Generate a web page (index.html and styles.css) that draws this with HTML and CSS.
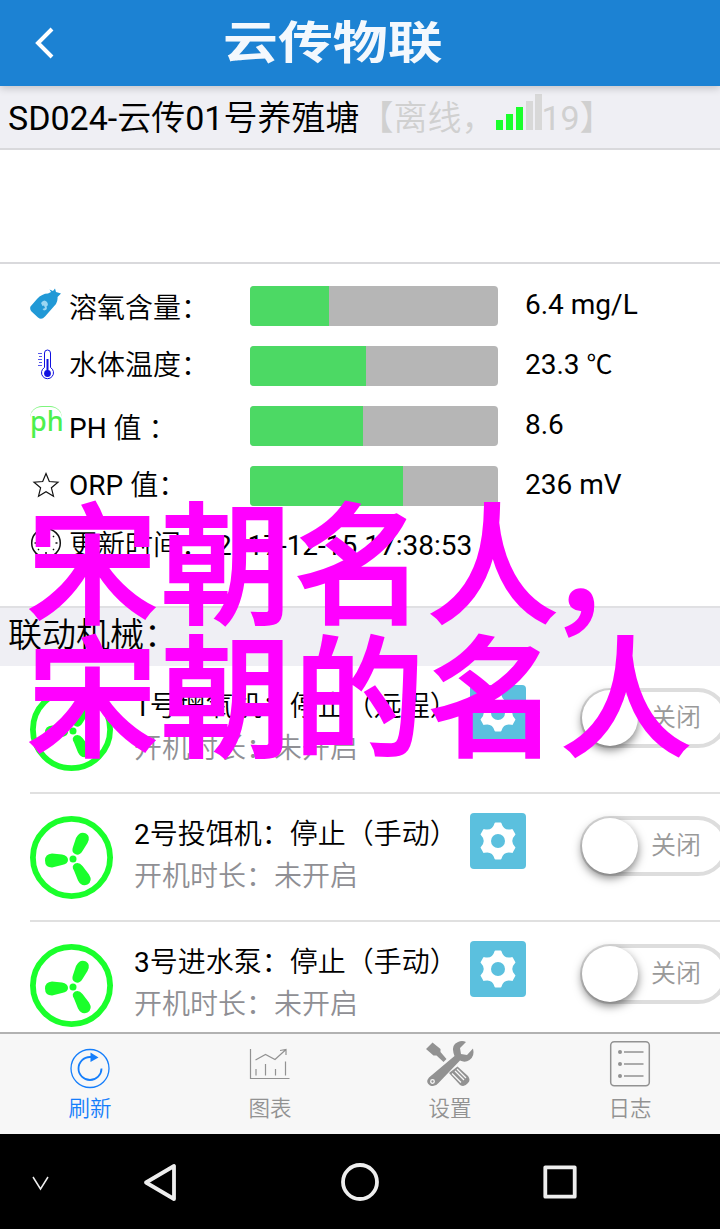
FILE: index.html
```html
<!DOCTYPE html>
<html lang="zh-CN">

<head>
    <meta charset="UTF-8">
    <meta name="viewport" content="width=device-width, initial-scale=1.0">
    <title>云传物联</title>
    <link rel="stylesheet" href="styles.css">
</head>

<body>
    <!-- 公用图标 -->
    <svg class="symbols">
        <symbol id="fan" viewBox="0 0 83 83">
            <circle cx="41.5" cy="41.5" r="38.6" fill="none" stroke="#1aff2b" stroke-width="5.8" />
            <g fill="#1aff2b">
                <circle cx="43" cy="43" r="3.5" />
                <path d="M22 37.500L32 38.500Q38 39.500 38 44Q38 48 32 49L22 51.500Q15 51.500 15 44.500Q15 38 22 37.500Z" />
                <path d="M43 31L46 22Q50 14.500 56 17.500Q61 20.500 57.500 27L52.500 35Q49 40.500 45 38Q41 36 43 31Z" />
                <path d="M44 54.500Q41 50 45 47.500Q49 45.500 52.500 50L59 58.500Q63 65 57.500 68.500Q51.500 71 48 64.500Z" />
            </g>
        </symbol>
        <symbol id="gear" viewBox="-20 -20 40 40">
            <path fill="#fff" stroke="#fff" stroke-width="2" stroke-linejoin="round"
                d="M-2.500 -17.500H2.500Q5 -8.600 13.900 -10.900L16.400 -6.600Q10 0 16.400 6.600L13.900 10.900Q5 8.600 2.500 17.500H-2.500Q-5 8.600 -13.900 10.900L-16.400 6.600Q-10 0 -16.400 -6.600L-13.900 -10.900Q-5 -8.600 -2.500 -17.500Z" />
            <circle r="7" fill="#5bc0de" />
        </symbol>
    </svg>

    <header class="header">
        <svg class="back" width="22" height="32" viewBox="0 0 22 32">
            <path d="M18 2L4 16L18 30" fill="none" stroke="#fff" stroke-width="4" />
        </svg>
        <h1 class="logo">云传物联</h1>
    </header>

    <div class="pond">
        <span>SD024-云传01号养殖塘</span>
        <span class="offline">【离线，</span>
        <svg class="signal" width="48" height="38" viewBox="0 0 48 38">
            <path fill="#1aff2b" d="M1 27h7v10H1zM11 21h7v16h-7zM21 14h7v23h-7z" />
            <path fill="#d8d8d8" d="M31 8h7v29h-7zM40 1h7v36h-7z" />
        </svg>
        <span class="offline">19】</span>
    </div>

    <div class="blank"></div>

    <ul class="params">
        <li>
            <svg class="icon icon_do" width="32" height="32" viewBox="0 0 32 32">
                <path fill="#2199d6"
                    d="M.500 18.500L7 11Q12 5.500 18 5.500L21 4L19.500 1.500L23 3L25 .500L26 4L31 5.500L27.500 9Q28 12 26 16L15 28.500Q11.500 32.500 8 29.500L1.500 23.500Q-.500 21 .500 18.500Z" />
                <path fill="#9bd7f2" d="M11 15Q14 10.500 17 14Q19 17 16.500 18.500Q18 22 14 22.500L12.500 21L15 20L14 17.500L12.500 18Z" />
            </svg>
            <span class="name name_do">溶氧含量：</span>
            <div class="bar"><div class="fill" style="width: 31.8%"></div></div>
            <span class="value">6.4 mg/L</span>
        </li>
        <li>
            <svg class="icon icon_temp" width="32" height="32" viewBox="0 0 32 32">
                <g fill="none" stroke="#1010e0" stroke-width="1">
                    <path d="M14.500 18.500V4Q14.500 1 17.500 1Q20.500 1 20.500 4V18.500A6 6 0 1 1 14.500 18.500Z" />
                    <path d="M8 4.500h4M9 7.500h3M8 10.500h4M9 13.500h3M8 16.500h4" opacity=".7" />
                    <path d="M17.500 10V24" stroke-width="2" />
                </g>
                <circle cx="17.500" cy="24.500" r="3.400" fill="#1010e0" />
            </svg>
            <span class="name name_temp">水体温度：</span>
            <div class="bar"><div class="fill" style="width: 46.8%"></div></div>
            <span class="value">23.3 <span class="unit">℃</span></span>
        </li>
        <li>
            <span class="icon icon_ph">ph</span>
            <span class="name name_ph">PH 值 ：</span>
            <div class="bar"><div class="fill" style="width: 45.6%"></div></div>
            <span class="value">8.6</span>
        </li>
        <li>
            <svg class="icon icon_orp" width="32" height="32" viewBox="0 0 32 32">
                <path fill="none" stroke="#111" stroke-width="1.200"
                    d="M16 4.500L19.300 12.500L28 13.200L21.400 18.800L23.500 27.200L16 22.700L8.500 27.200L10.600 18.800L4 13.200L12.700 12.500Z" />
            </svg>
            <span class="name name_orp">ORP 值：</span>
            <div class="bar"><div class="fill" style="width: 61.8%"></div></div>
            <span class="value">236 mV</span>
        </li>
        <li>
            <svg class="icon icon_time" width="32" height="32" viewBox="0 0 32 32">
                <circle cx="16" cy="16" r="14.300" fill="none" stroke="#111" stroke-width="1.500" />
                <path fill="none" stroke="#111" stroke-width="1.500"
                    d="M16 5V16H9M4.500 16h2M25.500 16h2M16 25v2M8 23l1 -1M24 23l-1 -1M8 9l1 1M24 9l-1 1" />
            </svg>
            <span class="name name_time">更新时间： 2017-12-15 17:38:53</span>
        </li>
    </ul>

    <h2 class="group">联动机械：</h2>

    <ul class="devices">
        <li>
            <svg class="fan"><use href="#fan" /></svg>
            <div class="item">
                <div class="info">
                    <p>1号增氧机：停止（远程）</p>
                    <p class="time">开机时长：未开启</p>
                </div>
                <button class="set"><svg width="40" height="40"><use href="#gear" /></svg></button>
                <div class="switch"><i class="knob"></i><span>关闭</span></div>
            </div>
        </li>
        <li>
            <svg class="fan"><use href="#fan" /></svg>
            <div class="item">
                <div class="info">
                    <p>2号投饵机：停止（手动）</p>
                    <p class="time">开机时长：未开启</p>
                </div>
                <button class="set"><svg width="40" height="40"><use href="#gear" /></svg></button>
                <div class="switch"><i class="knob"></i><span>关闭</span></div>
            </div>
        </li>
        <li>
            <svg class="fan"><use href="#fan" /></svg>
            <div class="item">
                <div class="info">
                    <p>3号进水泵：停止（手动）</p>
                    <p class="time">开机时长：未开启</p>
                </div>
                <button class="set"><svg width="40" height="40"><use href="#gear" /></svg></button>
                <div class="switch"><i class="knob"></i><span>关闭</span></div>
            </div>
        </li>
    </ul>

    <nav class="tabs">
        <a class="tab current">
            <svg width="50" height="50" viewBox="0 0 50 50" fill="none" stroke="#157efb">
                <circle cx="25" cy="29.500" r="19" stroke-width="1.300" />
                <path d="M36.500 29.500A11.500 11.500 0 1 1 25 18H27" stroke-width="1.800" />
                <path d="M25.500 13.500L33.500 18.500L25.500 23Z" fill="#157efb" stroke="none" />
            </svg>
            <span>刷新</span>
        </a>
        <a class="tab">
            <svg width="50" height="50" viewBox="0 0 50 50" fill="none" stroke="#929292" stroke-width="1.200">
                <path d="M5.500 10V39.500H44.500M10.500 21L20.500 15.500L30 20.500L41 10.500M35 11.500L41 10.500V16M11 36.500V30M20.500 36.500V25M30.500 36.500V30M40.500 36.500V22.500" />
            </svg>
            <span>图表</span>
        </a>
        <a class="tab">
            <svg width="50" height="50" viewBox="0 0 50 50">
                <g fill="#929292">
                    <path d="M1 10L7.500 3.500L15.500 10V13L21.500 20L18.500 23L11.500 16.500H8.500Z" />
                    <path d="M28.500 14Q26 6 33 3Q37 1 41 3L35 9L36 15L42 16L48 9.500Q50 17 44.500 21Q40 24 35 21.500L13.500 44Q10 48.500 5 46.500Q0 43 4 38.500L29.500 17Z" />
                    <path d="M24 34L32.500 27.500L43 37Q46 41 43 44Q39.500 48.500 35 46Z" />
                </g>
                <g fill="none" stroke="#f7f7f7" stroke-width="1.300">
                    <circle cx="7.500" cy="42.500" r="1.800" />
                    <path d="M27 34.500L36 43.500M30 32L39 41M32 30L41 39" />
                </g>
            </svg>
            <span>设置</span>
        </a>
        <a class="tab">
            <svg width="50" height="50" viewBox="0 0 50 50" fill="none" stroke="#929292" stroke-width="1.500">
                <rect x="5.700" y="2.700" width="38.600" height="44" rx="3.500" />
                <path d="M19 13h19.500M19 25h19.500M19 37h19.500" />
                <g fill="#929292" stroke="none">
                    <circle cx="15" cy="13" r="2" />
                    <circle cx="15" cy="25" r="2" />
                    <circle cx="15" cy="37" r="2" />
                </g>
            </svg>
            <span>日志</span>
        </a>
    </nav>

    <!-- 安卓导航栏 -->
    <footer class="android">
        <svg class="hide" width="80" height="40" viewBox="0 0 80 40" fill="none" stroke="#eee">
            <path d="M33 15L40.500 27L48 15" stroke-width="1.500" />
        </svg>
        <svg width="40" height="40" viewBox="0 0 40 40" fill="none" stroke="#eee" stroke-width="3.800" stroke-linejoin="round">
            <path d="M6 20.500L34 4V37Z" />
        </svg>
        <svg width="40" height="40" viewBox="0 0 40 40" fill="none" stroke="#eee" stroke-width="3.800">
            <circle cx="20" cy="20" r="17" />
        </svg>
        <svg width="40" height="40" viewBox="0 0 40 40" fill="none" stroke="#eee" stroke-width="3.800" stroke-linejoin="round">
            <rect x="5.300" y="5.300" width="29.400" height="29.400" />
        </svg>
    </footer>

    <div class="caption">宋朝名人<span class="comma">，</span><br>宋朝的名人</div>
</body>

</html>
```
FILE: styles.css
```css
* {
    margin: 0;
    padding: 0;
    box-sizing: border-box;
}

body {
    position: relative;
    display: flex;
    flex-direction: column;
    width: 720px;
    height: 1229px;
    overflow: hidden;
    background-color: #fff;
    color: #000;
    font-family: Roboto, "Noto Sans CJK SC DemiLight", "Noto Sans CJK SC", sans-serif;
    font-size: 28px;
}

li {
    list-style: none;
}

svg {
    display: block;
    flex-shrink: 0;
}

.symbols {
    display: none;
}

.header {
    display: flex;
    flex-shrink: 0;
    align-items: center;
    height: 86px;
    padding-left: 34px;
    background-color: #1c82d3;
    box-shadow: 0 2px 8px rgba(0, 0, 0, .2);
    z-index: 1;
}

.logo {
    margin-left: 167px;
    color: #f3f8fd;
    font-family: "Noto Sans CJK SC", sans-serif;
    font-size: 45px;
    font-weight: 700;
    line-height: 80px;
    padding-bottom: 6px;
    transform: scaleX(1.22);
    transform-origin: left;
}

.pond {
    display: flex;
    flex-shrink: 0;
    align-items: center;
    height: 64px;
    padding-left: 8px;
    border-bottom: 2px solid #d9d9dc;
    background-color: #efeff4;
    font-size: 34px;
    line-height: 62px;
    white-space: nowrap;
}

.pond span {
    padding-top: 1px;
}

.offline {
    color: #d0d0d0;
}

.signal {
    margin: -10px -2px 0 0;
}

.blank {
    flex-shrink: 0;
    height: 114px;
    border-bottom: 2px solid #d9d9dc;
}

.params {
    flex-shrink: 0;
    height: 342px;
    padding: 12px 0 0 30px;
}

.params li {
    display: flex;
    align-items: center;
    height: 60px;
    white-space: nowrap;
}

.icon {
    width: 32px;
    height: 32px;
    margin-right: 7px;
}

.icon_do {
    margin-bottom: 4px;
}

.icon_temp,
.icon_orp {
    margin-bottom: 2px;
}

.icon_ph {
    border-top: 1px solid #7df57d;
    border-radius: 12px 12px 0 0;
    margin-bottom: 8px;
    color: #4df04d;
    font-family: "Noto Sans", sans-serif;
    font-size: 27px;
    font-weight: 500;
    line-height: 27px;
}

.icon_time {
    margin-bottom: 6px;
}

.name {
    width: 181px;
    line-height: 40px;
}

.name_do {
    padding-top: 6px;
}

.name_ph {
    padding-top: 5px;
}

.name_orp,
.name_time {
    margin-bottom: 1px;
}

.bar {
    width: 248px;
    height: 40px;
    border-radius: 4px;
    background-color: #b6b6b6;
    overflow: hidden;
}

.fill {
    height: 100%;
    background-color: #4cd964;
}

.value {
    margin: 0 0 2px 27px;
    line-height: 40px;
}

.unit {
    font-family: "Noto Sans CJK SC", sans-serif;
    font-size: 26px;
    line-height: 1;
}

.group {
    flex-shrink: 0;
    height: 60px;
    padding-left: 8px;
    border-top: 2px solid #e0e0e3;
    background-color: #efeff4;
    font-size: 34px;
    font-weight: 400;
    line-height: 54px;
}

.devices {
    height: 366px;
    padding-left: 30px;
    overflow: hidden;
}

.devices li {
    display: flex;
    height: 128px;
    border-bottom: 2px solid #e0e0e0;
}

.fan {
    width: 83px;
    height: 83px;
    margin-top: 22px;
}

.item {
    display: flex;
    align-items: flex-start;
    margin-left: 21px;
}

.info {
    width: 336px;
    padding-top: 20px;
    line-height: 42px;
    white-space: nowrap;
}

.time {
    color: #8f8f94;
}

.set {
    display: flex;
    align-items: center;
    justify-content: center;
    flex-shrink: 0;
    width: 56px;
    height: 56px;
    margin-top: 19px;
    border: none;
    border-radius: 4px;
    background-color: #5bc0de;
}

.switch {
    display: flex;
    align-items: center;
    flex-shrink: 0;
    width: 148px;
    height: 60px;
    margin: 22px 0 0 54px;
    border: 4px solid #ddd;
    border-radius: 30px;
    color: #999;
    font-size: 25px;
}

.switch span {
    margin-bottom: 7px;
}

.knob {
    width: 56px;
    height: 56px;
    margin: 0 13px 0 -2px;
    border-radius: 50%;
    background-color: #fff;
    box-shadow: 0 4px 10px rgba(0, 0, 0, .5);
}

.tabs {
    display: flex;
    flex-shrink: 0;
    height: 102px;
    border-top: 2px solid #b2b2b2;
    background-color: #f7f7f7;
}

.tab {
    display: flex;
    flex: 1;
    flex-direction: column;
    align-items: center;
    padding-top: 5px;
    color: #929292;
    font-size: 21.5px;
    line-height: 39px;
}

.tab.current {
    color: #157efb;
}

.android {
    display: flex;
    flex-shrink: 0;
    align-items: center;
    gap: 160px;
    height: 95px;
    background-color: #000;
}

.hide {
    margin-right: -100px;
}

/* 浮在页面上的大字 */
.caption {
    position: absolute;
    top: 490px;
    left: 27px;
    z-index: 2;
    color: #f0f;
    font-family: "Noto Sans CJK SC", sans-serif;
    font-size: 131px;
    font-weight: 500;
    letter-spacing: 2.4px;
    line-height: 133px;
    white-space: nowrap;
    -webkit-text-stroke: 2px #f0f;
}

.comma {
    position: relative;
    top: 7px;
    left: -14px;
}
```
